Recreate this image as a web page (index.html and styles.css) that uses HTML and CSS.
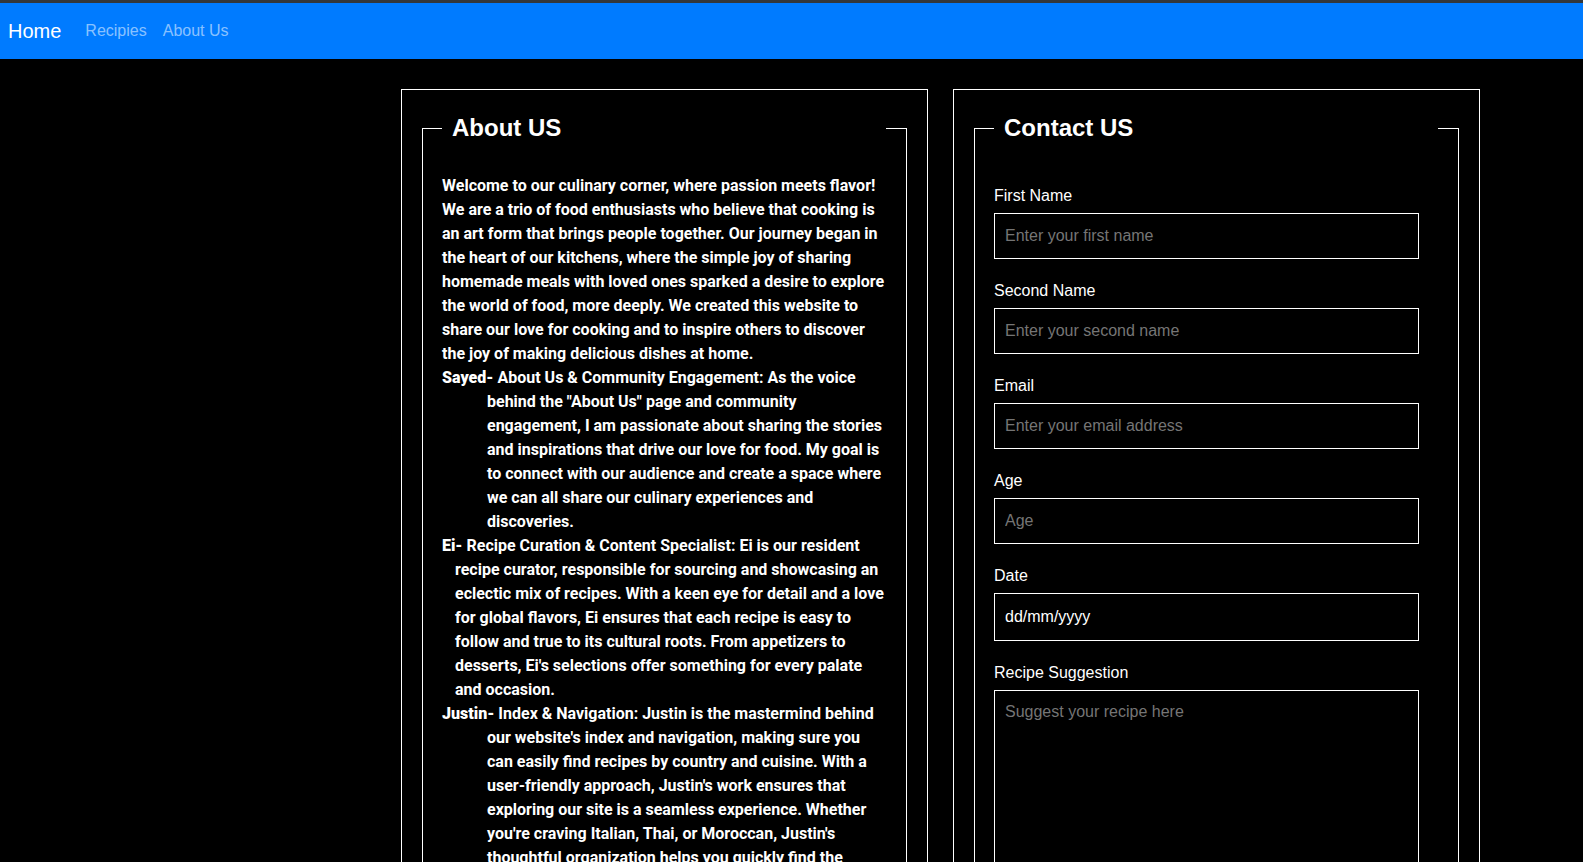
FILE: index.html
```html
<!DOCTYPE html>
<html lang="en">
<head>
<meta charset="utf-8">
<title>About Us</title>
<link rel="stylesheet" href="styles.css">
</head>
<body>
<nav class="navbar">
  <a class="brand" href="#">Home</a>
  <a class="nav-link" href="#">Recipies</a>
  <a class="nav-link" href="#">About Us</a>
</nav>
<main class="main">
  <section class="box">
    <fieldset class="panel">
      <legend class="panel-title">About US</legend>
      <div class="about">
        <p class="intro">Welcome to our culinary corner, where passion meets flavor! We are a trio of food enthusiasts who believe that cooking is an art form that brings people together. Our journey began in the heart of our kitchens, where the simple joy of sharing homemade meals with loved ones sparked a desire to explore the world of food, more deeply. We created this website to share our love for cooking and to inspire others to discover the joy of making delicious dishes at home.</p>
        <p class="member member-wide"><strong class="name">Sayed-</strong> About Us &amp; Community Engagement: As the voice behind the "About Us" page and community engagement, I am passionate about sharing the stories and inspirations that drive our love for food. My goal is to connect with our audience and create a space where we can all share our culinary experiences and discoveries.</p>
        <p class="member member-narrow"><strong class="name">Ei-</strong> Recipe Curation &amp; Content Specialist: Ei is our resident recipe curator, responsible for sourcing and showcasing an eclectic mix of recipes. With a keen eye for detail and a love for global flavors, Ei ensures that each recipe is easy to follow and true to its cultural roots. From appetizers to desserts, Ei's selections offer something for every palate and occasion.</p>
        <p class="member member-wide"><strong class="name">Justin-</strong> Index &amp; Navigation: Justin is the mastermind behind our website's index and navigation, making sure you can easily find recipes by country and cuisine. With a user-friendly approach, Justin's work ensures that exploring our site is a seamless experience. Whether you're craving Italian, Thai, or Moroccan, Justin's thoughtful organization helps you quickly find the recipes you love.</p>
      </div>
    </fieldset>
  </section>
  <section class="box">
    <fieldset class="panel">
      <legend class="panel-title">Contact US</legend>
      <form class="form">
        <label class="label" for="fname">First Name</label>
        <input class="field" id="fname" type="text" placeholder="Enter your first name">
        <label class="label" for="sname">Second Name</label>
        <input class="field" id="sname" type="text" placeholder="Enter your second name">
        <label class="label" for="email">Email</label>
        <input class="field" id="email" type="text" placeholder="Enter your email address">
        <label class="label" for="age">Age</label>
        <input class="field" id="age" type="text" placeholder="Age">
        <label class="label" for="date">Date</label>
        <input class="field field-date" id="date" type="text" value="dd/mm/yyyy">
        <label class="label" for="recipe">Recipe Suggestion</label>
        <textarea class="field field-area" id="recipe" placeholder="Suggest your recipe here"></textarea>
      </form>
    </fieldset>
  </section>
</main>
</body>
</html>
```

FILE: styles.css
```css
* {
  box-sizing: border-box;
}

body {
  margin: 0;
  background: #000;
  color: #fff;
  font-family: "Liberation Sans", Arial, sans-serif;
}

.navbar {
  display: flex;
  align-items: center;
  height: 59px;
  border-top: 3px solid #33373b;
  background: #007bff;
  padding: 0 8px;
}

.brand {
  font-size: 20px;
  color: #fff;
  text-decoration: none;
  margin-right: 16px;
}

.nav-link {
  font-size: 16px;
  color: rgba(255, 255, 255, 0.55);
  text-decoration: none;
  padding: 0 8px;
}

.main {
  display: flex;
  align-items: flex-start;
  gap: 25px;
  padding: 30px 0 0 401px;
}

.box {
  width: 527px;
  flex: none;
  border: 1px solid #fff;
  padding: 24px 20px 20px;
}

.panel {
  margin: 0;
  border: 1px solid #fff;
  padding: 0 20px 20px 19px;
  min-width: 0;
}

.panel-title {
  width: 100%;
  padding: 0 10px;
  font-size: 24px;
  font-weight: 700;
  line-height: 28px;
  color: #fff;
}

.about {
  padding-top: 32px;
  font-family: Roboto, "Liberation Sans", sans-serif;
  font-weight: 700;
  font-size: 16px;
  line-height: 24px;
  color: #fff;
}

.about p {
  margin: 0;
}

.name {
  font-weight: 900;
}

.member-wide {
  padding-left: 45px;
  text-indent: -45px;
}

.member-narrow {
  padding-left: 13px;
  text-indent: -13px;
}

.form {
  display: flex;
  flex-direction: column;
  padding-top: 43px;
}

.label {
  display: block;
  font-size: 16px;
  line-height: 20px;
  padding-top: 1px;
  margin-bottom: 7px;
  color: #fff;
}

.field {
  display: block;
  width: calc(100% - 19px);
  height: 46px;
  margin: 0 0 21px;
  padding: 0 10px;
  border: 1px solid #fff;
  border-radius: 0;
  background: #000;
  color: #fff;
  font-family: "Liberation Sans", Arial, sans-serif;
  font-size: 16px;
  outline: none;
}

.field::placeholder {
  color: #757575;
}

.field-date {
  height: 48px;
}

.field-area {
  height: 200px;
  padding: 12px 10px;
  resize: vertical;
}
```
